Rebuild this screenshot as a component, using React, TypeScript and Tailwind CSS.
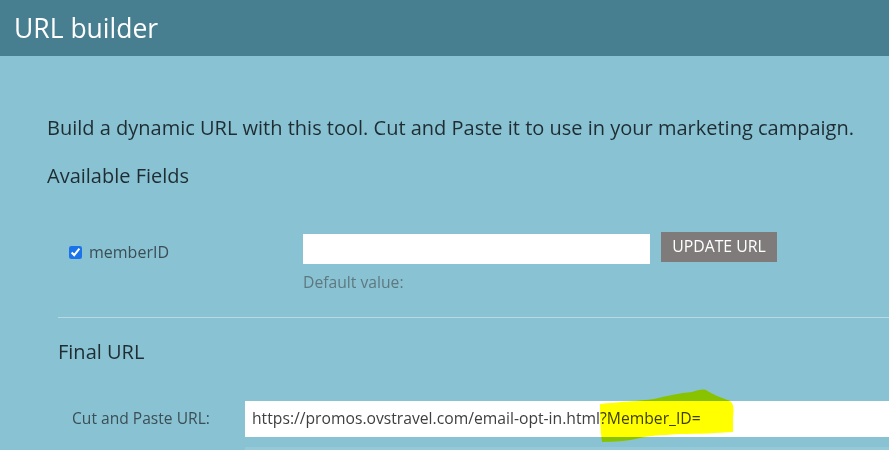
export default function App() {
  const font = { fontFamily: '"Open Sans", "Noto Sans", sans-serif' };

  return (
    <div className="min-h-screen w-full overflow-hidden bg-[#89c3d3]" style={font}>
      <header className="flex h-14 items-center bg-[#477f91] px-[14px]">
        <h1 className="text-[26.5px] leading-none text-white">URL builder</h1>
      </header>

      <main className="pl-[47px]">
        <p className="mt-[58px] whitespace-nowrap text-[20px] leading-[28px] text-[#1f2d33]">
          Build a dynamic URL with this tool. Cut and Paste it to use in your marketing campaign.
        </p>
        <h2 className="mt-[20px] text-[20px] leading-[28px] text-[#1f2d33]">Available Fields</h2>

        <div className="mt-[42px] flex items-start pl-[22px]">
          <label className="mt-[8px] flex w-[234px] items-center gap-[7px] text-[16px] text-[#3c4e55]">
            <input type="checkbox" defaultChecked className="h-[13px] w-[13px] accent-[#1a73e8]" />
            memberID
          </label>
          <div className="flex flex-col">
            <input
              type="text"
              className="mt-[2px] h-[30px] w-[347px] border-0 bg-white px-2 text-[15px] outline-none"
            />
            <span className="mt-[7px] text-[15.7px] leading-[22px] text-[#5e7880]">Default value:</span>
          </div>
          <button className="ml-[11px] h-[30px] w-[116px] bg-[#7f7b7b] text-[15.8px] text-white">
            UPDATE URL
          </button>
        </div>

        <section className="ml-[11px] mt-[24px] border-t border-[#b8d9e2]">
          <h2 className="mt-[20px] text-[20px] leading-[28px] text-[#1f2d33]">Final URL</h2>
          <div className="relative mt-[35px] flex items-center pl-[14px]">
            <span className="w-[173px] text-[15.6px] text-[#3c4e55]">Cut and Paste URL:</span>
            <div className="flex h-[36px] flex-1 items-center whitespace-nowrap bg-white pl-[7px] text-[15.7px] text-[#3f3f3f]">
              https://promos.ovstravel.com/email-opt-in.html?Member_ID=
            </div>
            <svg
              className="pointer-events-none absolute left-[542px] top-[-13px] mix-blend-multiply"
              width="140"
              height="56"
              viewBox="0 0 140 56"
            >
              <path
                d="M0 16 C18 14 40 13 54 11 C66 8 80 5 92 4 C98 2 102 1 106 2 C112 6 122 10 130 13 C134 16 134 22 133 30 L133 44 C118 45 98 46 80 46 C66 47 52 47 40 50 C28 53 14 54 2 54 C0 42 0 28 0 16 Z"
                fill="#ffff00"
              />
            </svg>
          </div>
          <div className="ml-[187px] mt-[10px] h-[20px] bg-white/10" />
        </section>
      </main>
    </div>
  );
}
